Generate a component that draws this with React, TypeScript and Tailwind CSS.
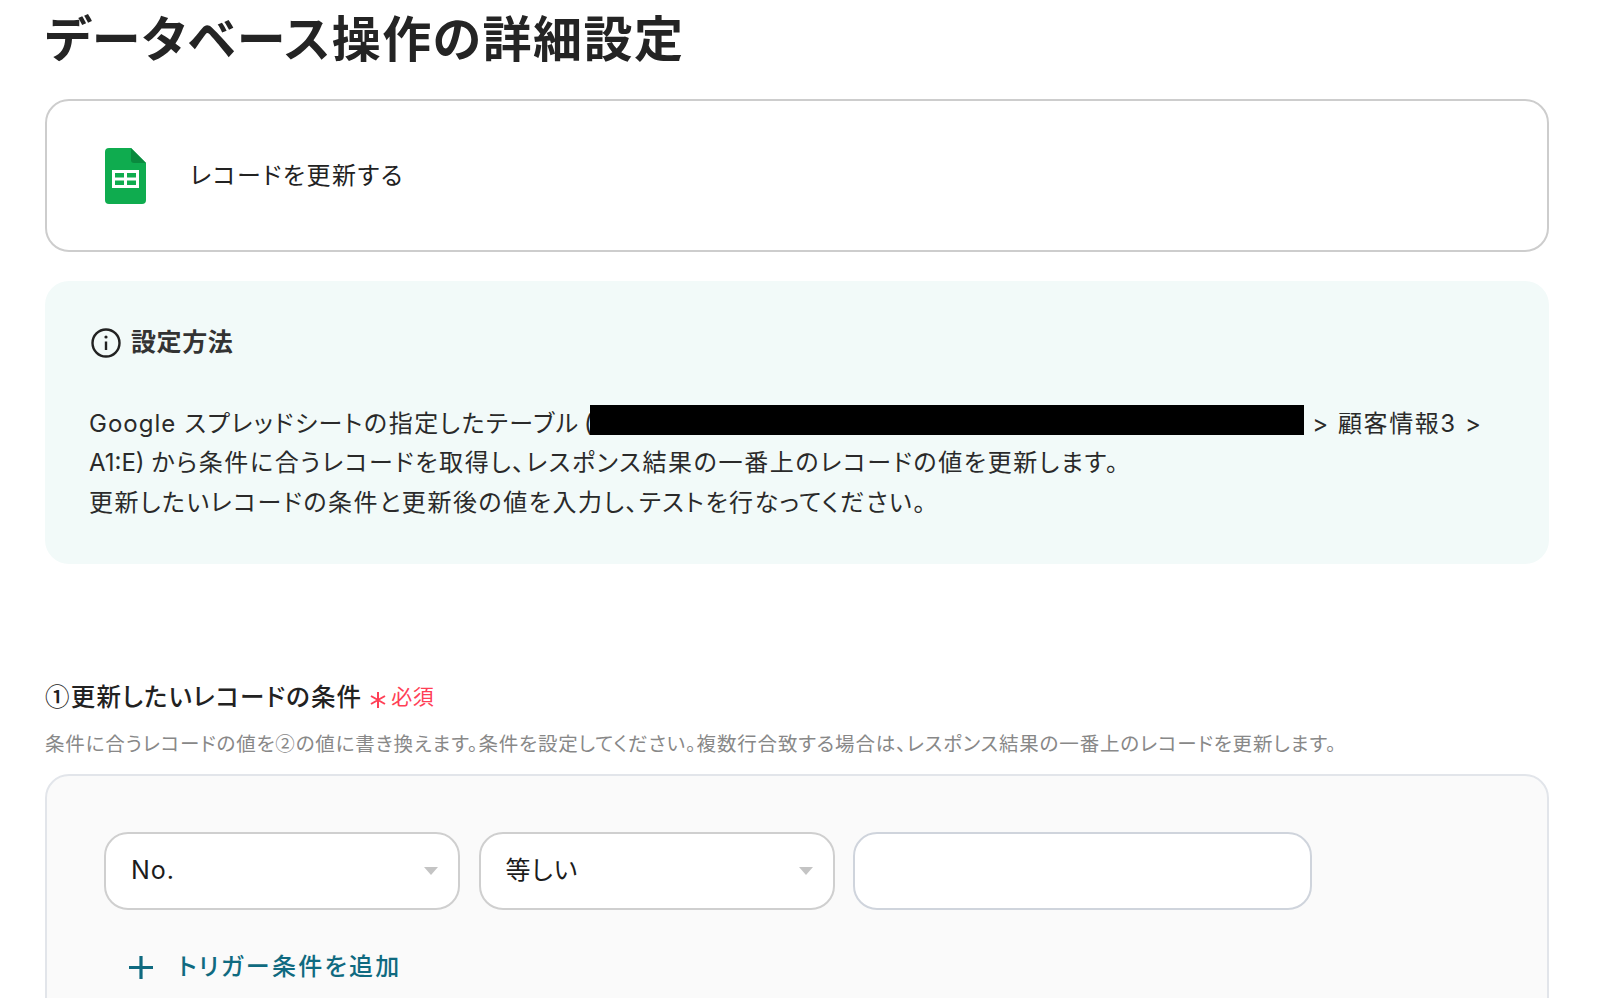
const font = "font-['Inter','Noto_Sans_CJK_JP',sans-serif] [font-feature-settings:'palt']";

function SheetsIcon() {
  return (
    <svg width="41" height="56" viewBox="0 0 41 56">
      <path d="M4 0H26L41 15V52a4 4 0 0 1-4 4H4a4 4 0 0 1-4-4V4a4 4 0 0 1 4-4Z" fill="#0FAC4F" />
      <path d="M26 0L41 15H29a3 3 0 0 1-3-3Z" fill="#0A8A3E" />
      <path d="M7 22H34V40H7Z" fill="#fff" />
      <path d="M10 25H19V29.5H10ZM22 25H31V29.5H22ZM10 32.5H19V37H10ZM22 32.5H31V37H22Z" fill="#0FAC4F" />
    </svg>
  );
}

function Select({ label }: { label: string }) {
  return (
    <div className="flex h-[78px] w-[356px] items-center justify-between rounded-[24px] border-2 border-[#cfcfcf] bg-white pl-[25px] pr-[20px]">
      <span className="text-[25px] tracking-[1px] text-[#1c1c1c]">{label}</span>
      <span className="h-0 w-0 border-x-[7px] border-t-[8px] border-x-transparent border-t-[#c4c4c4]" />
    </div>
  );
}

export default function App() {
  return (
    <div className={`${font} h-[998px] overflow-hidden bg-white pl-[45px] pr-[51px] text-[#222]`}>
      <h1 className="h-[99px] pt-[8px] text-[49px] leading-[64px] font-bold tracking-[1.5px] text-[#242424]">
        データベース操作の詳細設定
      </h1>

      <div className="flex h-[153px] items-center rounded-[24px] border-2 border-[#cdcdcd] pl-[58px]">
        <SheetsIcon />
        <span className="ml-[44px] text-[24px] tracking-[1.55px] text-[#222]">レコードを更新する</span>
      </div>

      <div className="mt-[29px] h-[283px] rounded-[24px] bg-[#f2faf9] pt-[46px] pl-[45px]">
        <div className="flex h-[32px] items-center">
          <svg width="32" height="32" viewBox="0 0 32 32" fill="none" stroke="#222" strokeWidth="2.4">
            <circle cx="16" cy="16" r="13.5" />
            <path d="M16 14.5V23" />
            <circle cx="16" cy="10" r="1.6" fill="#222" stroke="none" />
          </svg>
          <span className="ml-[9px] text-[25px] font-bold tracking-[0.6px] text-[#333]">設定方法</span>
        </div>
        <div className="mt-[45px] ml-[-1px] w-[1440px] text-[24px] leading-[39.3px] tracking-[1.55px] text-[#2a2a2a]">
          <div className="flex items-center">
            <span className="tracking-[1px]">Google</span>&nbsp;スプレッドシートの指定したテーブル&nbsp;
            <span className="ml-[-4px]">(</span>
            <span className="mb-[7px] ml-[-4px] inline-block h-[30px] w-[714px] bg-black" />
            <span className="ml-[8px]">&gt; 顧客情報3 &gt;</span>
          </div>
          <div className="tracking-[1.65px]">
            <span className="tracking-[0px]">A1:E) </span>から条件に合うレコードを取得し、レスポンス結果の一番上のレコードの値を更新します。
          </div>
          <div>更新したいレコードの条件と更新後の値を入力し、テストを行なってください。</div>
        </div>
      </div>

      <div className="mt-[116px] flex h-[34px] items-center">
        <span className="text-[24.5px] font-medium tracking-[1.2px] text-[#222]">
          <span className="font-['Noto_Sans_CJK_JP',sans-serif]">①</span>更新したいレコードの条件
        </span>
        <svg className="ml-[8px] mt-[6px]" width="16" height="16" viewBox="0 0 16 16" stroke="#ff3f56" strokeWidth="2">
          <path d="M8 0V16M1 4L15 12M15 4L1 12" />
        </svg>
        <span className="ml-[5px] text-[21px] tracking-[0.5px] text-[#ff3f56]">必須</span>
      </div>
      <p className="mt-[15px] text-[19.5px] leading-[28px] tracking-[0.85px] whitespace-nowrap text-[#888]">
        条件に合うレコードの値を<span className="font-['Noto_Sans_CJK_JP',sans-serif]">②</span>の値に書き換えます。条件を設定してください。複数行合致する場合は、レスポンス結果の一番上のレコードを更新します。
      </p>

      <div className="mt-[16px] h-[300px] rounded-[24px] border-2 border-[#e2e5ea] bg-[#fafafa] pt-[56px] pl-[57px]">
        <div className="flex gap-[18.5px]">
          <Select label="No." />
          <Select label="等しい" />
          <div className="h-[78px] w-[459px] rounded-[24px] border-2 border-[#cfd4dc] bg-white" />
        </div>
        <div className="mt-[39px] ml-[25px] flex items-center text-[#0f6a80]">
          <svg width="24" height="24" viewBox="0 0 24 24" stroke="#0f6a80" strokeWidth="3.2">
            <path d="M0 12.5H24M12 1V24" />
          </svg>
          <span className="ml-[25px] text-[24px] font-medium tracking-[2.3px]">トリガー条件を追加</span>
        </div>
      </div>
    </div>
  );
}
